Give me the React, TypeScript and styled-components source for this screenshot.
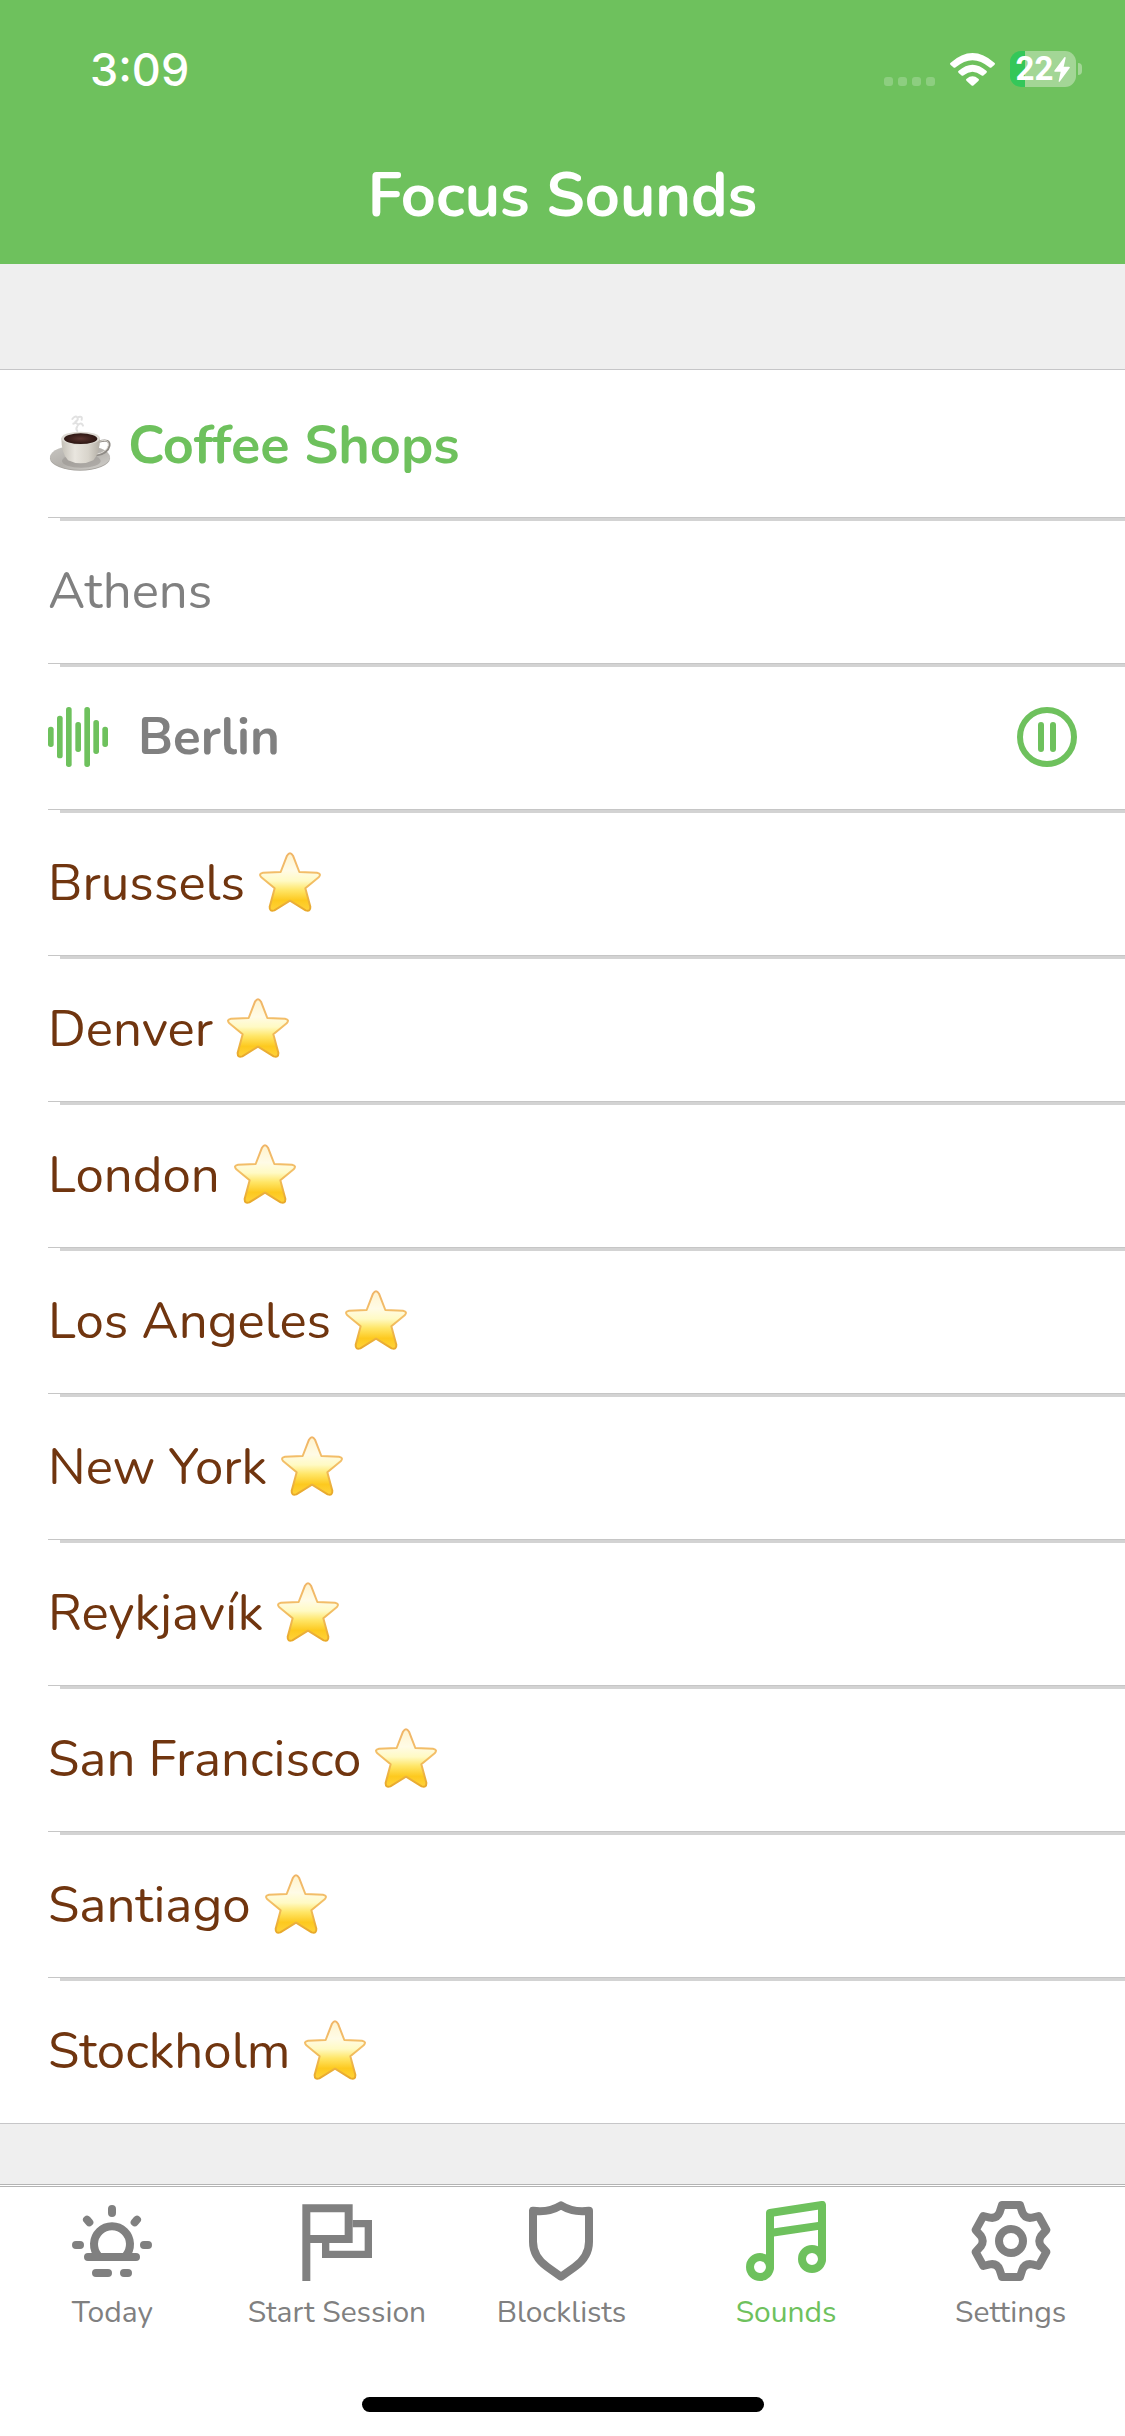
import React from "react";
import styled, { createGlobalStyle } from "styled-components";

const GREEN = "#6ec15d";
const GREY = "#808080";
const BROWN = "#70350f";

const GlobalStyle = createGlobalStyle`
  *, *::before, *::after { box-sizing: border-box; }
  body {
    margin: 0;
    background: #efefef;
    font-family: Nunito, Lato, "Open Sans", sans-serif;
  }
  button { font: inherit; color: inherit; background: none; border: 0; padding: 0; cursor: pointer; }
  svg { display: block; flex: none; }
`;

const Page = styled.div`
  min-height: 100vh;
  display: flex;
  flex-direction: column;
`;

const Header = styled.header`
  background: ${GREEN};
  color: #fff;
`;

const StatusBar = styled.div`
  height: 138px;
  padding: 0 43px 0 90px;
  display: flex;
  align-items: center;
  justify-content: space-between;
`;

const Clock = styled.time`
  font-family: Inter, sans-serif;
  font-size: 45px;
  font-weight: 500;
`;

const StatusIcons = styled.div`
  display: flex;
  align-items: center;
  gap: 15px;
`;

const SignalDots = styled.div`
  display: flex;
  gap: 5px;
  padding-top: 24px;
`;

const Dot = styled.span`
  width: 9px;
  height: 9px;
  border-radius: 3px;
  background: rgba(255, 255, 255, 0.22);
`;

const Battery = styled.div`
  display: flex;
  align-items: center;
  gap: 2px;
`;

const BatteryBody = styled.div<{ $level: number }>`
  width: 66px;
  height: 36px;
  border-radius: 11px;
  display: flex;
  align-items: center;
  justify-content: center;
  gap: 1px;
  font-family: Roboto, sans-serif;
  font-size: 33px;
  font-weight: 700;
  line-height: 36px;
  background: linear-gradient(
    to right,
    #34c759 ${(p) => p.$level}%,
    #a3d696 ${(p) => p.$level}%
  );
`;

const BatteryNub = styled.span`
  width: 4px;
  height: 12px;
  border-radius: 0 4px 4px 0;
  background: #a3d696;
`;

const NavBar = styled.div`
  height: 126px;
  padding-bottom: 10px;
  display: flex;
  align-items: center;
  justify-content: center;
`;

const Title = styled.h1`
  margin: 0;
  font-size: 61px;
  font-weight: 700;
  line-height: 72px;
`;

const Main = styled.main`
  flex: 1;
  padding: 105px 0 60px;
`;

const Section = styled.section`
  background: #fff;
  border-top: 1px solid #c6c6c8;
  border-bottom: 1px solid #c6c6c8;
`;

const SectionHeading = styled.h2`
  margin: 0;
  height: 147px;
  padding: 2px 48px 0;
  display: flex;
  align-items: center;
  gap: 16px;
  color: ${GREEN};
  font-size: 54px;
  font-weight: 700;
`;

const List = styled.ul`
  margin: 0;
  padding: 0;
  list-style: none;
`;

const Row = styled.li`
  height: 146px;
  padding: 2px 48px 0;
  display: flex;
  align-items: center;
  background:
    linear-gradient(#c6c6c6, #c6c6c6) 48px 0 / 100% 1px no-repeat,
    linear-gradient(#d3d3d3, #d3d3d3) 60px 1px / 100% 3px no-repeat;
`;

const SoundButton = styled.button<{ $color: string; $playing: boolean }>`
  flex: 1;
  height: 100%;
  display: flex;
  align-items: center;
  gap: ${(p) => (p.$playing ? 30 : 13)}px;
  color: ${(p) => p.$color};
  font-size: 51px;
  font-weight: ${(p) => (p.$playing ? 700 : 400)};
  text-align: left;
`;

const TabBar = styled.nav`
  background: #fff;
  border-top: 3px double #b4b4b4;
`;

const Tabs = styled.div`
  display: grid;
  grid-template-columns: repeat(5, 1fr);
  padding: 14px 2px 0 0;
`;

const Tab = styled.a<{ $active: boolean }>`
  display: flex;
  flex-direction: column;
  align-items: center;
  gap: 12px;
  color: ${(p) => (p.$active ? GREEN : GREY)};
  font-size: 30px;
  line-height: 40px;
  text-decoration: none;
`;

const HomeArea = styled.div`
  padding: 64px 0 24px;
  display: flex;
  justify-content: center;
`;

const HomeIndicator = styled.div`
  width: 402px;
  height: 15px;
  border-radius: 8px;
  background: #000;
`;

const WifiIcon = () => (
  <svg width="45" height="33" viewBox="0 0 135 99" fill="#fff" aria-hidden="true">
    <path d="M2 29Q67.500-29 133 29Q137 32 133 36L125 43Q122 46 118 43Q67.500 0 17 43Q13 46 10 43L2 36Q-2 32 2 29Z" />
    <path d="M26 53Q67.500 17 109 53Q113 56 109 60L101 67Q98 70 94 67Q67.500 46 41 67Q37 70 34 67L26 60Q22 56 26 53Z" />
    <path d="M50 77Q67.500 63 85 77Q89 80 85 84L71 97Q67.500 100 64 97L50 84Q46 80 50 77Z" />
  </svg>
);

const BoltIcon = () => (
  <svg width="16" height="25" viewBox="0 0 48 75" fill="#fff" aria-hidden="true">
    <path d="M31 1Q35-1 35 3L29 29H45Q49 29 47 33L18 73Q14 77 14 72L20 44H3Q-1 44 2 40Z" />
  </svg>
);

const CoffeeIcon = () => (
  <svg width="64" height="64" viewBox="0 0 192 192" aria-hidden="true">
    <defs>
      <linearGradient id="saucer" x1="0" y1="0" x2="1" y2="1">
        <stop offset="0" stopColor="#c9c7c3" />
        <stop offset="0.5" stopColor="#b3b0ab" />
        <stop offset="1" stopColor="#d3d1cd" />
      </linearGradient>
      <linearGradient id="cup" x1="0" y1="0" x2="1" y2="0">
        <stop offset="0" stopColor="#c4c0b7" />
        <stop offset="0.35" stopColor="#e9e6df" />
        <stop offset="0.7" stopColor="#d8d4cb" />
        <stop offset="1" stopColor="#b3aea5" />
      </linearGradient>
      <radialGradient id="coffee">
        <stop offset="0" stopColor="#5a3530" />
        <stop offset="1" stopColor="#2c1612" />
      </radialGradient>
    </defs>
    <g fill="none" stroke="#dadada" strokeWidth="6" strokeLinecap="round" opacity="0.8">
      <path d="M73 18q8-12 16-4q2 8-7 12M92 12q12-4 9 8M76 32q10-6 14 4q10-10 15 2M88 40q-6 8 0 14" />
    </g>
    <ellipse cx="96" cy="136" rx="90" ry="37" fill="#a8a5a0" />
    <ellipse cx="96" cy="133" rx="90" ry="37" fill="url(#saucer)" />
    <ellipse cx="100" cy="144" rx="58" ry="20" fill="#96928d" opacity="0.5" />
    <path d="M152 86Q187 76 184 98Q179 122 143 127" fill="none" stroke="#8f8b86" strokeWidth="7" />
    <path d="M152 85Q184 76 181 97Q176 119 143 124" fill="none" stroke="#e2dfd9" strokeWidth="3" />
    <path d="M40 76Q40 122 60 142Q78 151 98 151Q118 151 136 142Q156 122 156 76Z" fill="url(#cup)" />
    <ellipse cx="98" cy="76" rx="58" ry="20" fill="#dcd9d2" />
    <ellipse cx="98" cy="77" rx="50" ry="16" fill="url(#coffee)" />
  </svg>
);

const StarIcon = () => (
  <svg width="64" height="64" viewBox="0 0 192 192" role="img" aria-label="Premium">
    <defs>
      <linearGradient id="starFill" x1="0" y1="0" x2="0" y2="1">
        <stop offset="0" stopColor="#fff3cd" />
        <stop offset="0.3" stopColor="#fffbe6" />
        <stop offset="0.48" stopColor="#fffac4" />
        <stop offset="0.64" stopColor="#ffe667" />
        <stop offset="0.82" stopColor="#fdc91f" />
        <stop offset="1" stopColor="#ffd23a" />
      </linearGradient>
      <linearGradient id="starEdge" x1="0" y1="0" x2="0" y2="1">
        <stop offset="0" stopColor="#f0b567" />
        <stop offset="0.45" stopColor="#f3c069" />
        <stop offset="1" stopColor="#e8a92a" />
      </linearGradient>
    </defs>
    <path
      d="M87 14Q96 0 105 14L124 63L177 65Q192 68 182 79L142 112L157 167Q158 183 143 178L96 149L49 178Q34 183 35 167L50 112L10 79Q0 68 15 65L68 63Z"
      fill="url(#starFill)"
      stroke="url(#starEdge)"
      strokeWidth="6"
      strokeLinejoin="round"
    />
  </svg>
);

const BARS = [
  [0, 59, 61],
  [27, 26, 128],
  [54, 0, 180],
  [82, 45, 90],
  [109, 0, 180],
  [136, 39, 102],
  [163, 59, 61],
];

const WaveIcon = () => (
  <svg width="60" height="60" viewBox="0 0 180 180" fill={GREEN} aria-hidden="true">
    {BARS.map(([x, y, h]) => (
      <rect key={x} x={x} y={y} width="17" height={h} rx="8" />
    ))}
  </svg>
);

const PauseIcon = () => (
  <svg width="60" height="60" viewBox="0 0 180 180" fill="none" stroke={GREEN} strokeWidth="18" strokeLinecap="round" aria-hidden="true">
    <circle cx="90" cy="90" r="81" />
    <path d="M72 54V126M108 54V126" />
  </svg>
);

const TabSvg = ({ children, sharp }: { children: React.ReactNode; sharp?: boolean }) => (
  <svg
    width="80"
    height="80"
    viewBox="0 0 240 240"
    fill="none"
    stroke="currentColor"
    strokeWidth="24"
    strokeLinecap={sharp ? "butt" : "round"}
    strokeLinejoin={sharp ? "miter" : "round"}
    aria-hidden="true"
  >
    {children}
  </svg>
);

const TodayIcon = () => (
  <TabSvg>
    <path d="M120 24V36M45 56L52 64M195 56L188 64M12 132H24M216 132H228M48 168H192M72 216H108M156 216H168" />
    <path d="M80 166A54 54 0 1 1 160 166" />
  </TabSvg>
);

const FlagIcon = () => (
  <TabSvg sharp>
    <path d="M28 240V22H155V114H28" />
    <path d="M167 68H214V160H86V126" strokeWidth="22" />
  </TabSvg>
);

const ShieldIcon = () => (
  <TabSvg>
    <path d="M120 13Q82 36 36 29V122C36 158 54 180 79 198L120 227L161 198C186 180 204 158 204 122V29Q158 36 120 13Z" />
  </TabSvg>
);

const MusicIcon = () => (
  <TabSvg>
    <circle cx="42" cy="198" r="30" />
    <circle cx="198" cy="174" r="30" />
    <path d="M72 198V36L228 12V174M72 96L228 73" />
  </TabSvg>
);

const GearIcon = () => (
  <TabSvg>
    <circle cx="120" cy="120" r="36" />
    <path d="M93 12H147L154 34Q162 54 184 50L203 45L226 87L210 105Q200 120 210 135L226 153L203 195L184 190Q162 186 154 206L147 228H93L86 206Q78 186 56 190L37 195L14 153L30 135Q40 120 30 105L14 87L37 45L56 50Q78 54 86 34Z" />
  </TabSvg>
);

type Sound = { name: string; playing?: boolean; premium?: boolean };

const SOUNDS: Sound[] = [
  { name: "Athens" },
  { name: "Berlin", playing: true },
  { name: "Brussels", premium: true },
  { name: "Denver", premium: true },
  { name: "London", premium: true },
  { name: "Los Angeles", premium: true },
  { name: "New York", premium: true },
  { name: "Reykjavík", premium: true },
  { name: "San Francisco", premium: true },
  { name: "Santiago", premium: true },
  { name: "Stockholm", premium: true },
];

const TABS = [
  { label: "Today", Icon: TodayIcon },
  { label: "Start Session", Icon: FlagIcon },
  { label: "Blocklists", Icon: ShieldIcon },
  { label: "Sounds", Icon: MusicIcon },
  { label: "Settings", Icon: GearIcon },
];

export default function App() {
  return (
    <Page>
      <GlobalStyle />
      <Header>
        <StatusBar>
          <Clock>3:09</Clock>
          <StatusIcons>
            <SignalDots>
              <Dot />
              <Dot />
              <Dot />
              <Dot />
            </SignalDots>
            <WifiIcon />
            <Battery>
              <BatteryBody $level={22}>
                22
                <BoltIcon />
              </BatteryBody>
              <BatteryNub />
            </Battery>
          </StatusIcons>
        </StatusBar>
        <NavBar>
          <Title>Focus Sounds</Title>
        </NavBar>
      </Header>
      <Main>
        <Section>
          <SectionHeading>
            <CoffeeIcon />
            Coffee Shops
          </SectionHeading>
          <List>
            {SOUNDS.map(({ name, playing = false, premium = false }) => (
              <Row key={name}>
                <SoundButton type="button" $playing={playing} $color={premium ? BROWN : GREY}>
                  {playing && <WaveIcon />}
                  {name}
                  {premium && <StarIcon />}
                </SoundButton>
                {playing && (
                  <button type="button" aria-label="Pause">
                    <PauseIcon />
                  </button>
                )}
              </Row>
            ))}
          </List>
        </Section>
      </Main>
      <TabBar>
        <Tabs>
          {TABS.map(({ label, Icon }) => (
            <Tab key={label} href="#" $active={label === "Sounds"}>
              <Icon />
              {label}
            </Tab>
          ))}
        </Tabs>
        <HomeArea>
          <HomeIndicator />
        </HomeArea>
      </TabBar>
    </Page>
  );
}
